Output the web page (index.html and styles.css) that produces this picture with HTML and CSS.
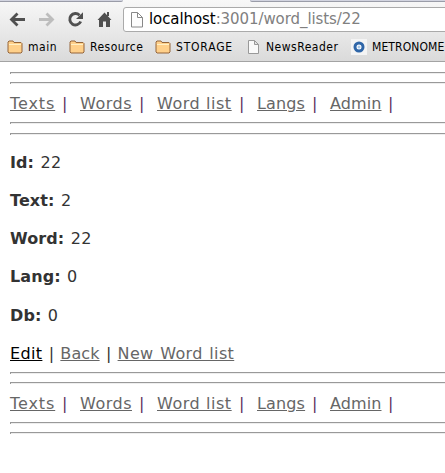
FILE: index.html
```html
<!DOCTYPE html>
<html lang="en">
<head>
<meta charset="utf-8">
<title>Word list</title>
<link rel="stylesheet" href="styles.css">
</head>
<body>
<header class="chrome">
  <div class="tabs"><i class="tab left"></i><i class="tab right"></i></div>
  <div class="toolbar">
    <svg class="nav" width="122" height="30" viewBox="0 6 122 30" fill="none" stroke="#505050" stroke-width="2.8">
      <path d="M25 19.500H12M17.500 13.500l-6 6 6 6"/>
      <path stroke="#bdbdbd" d="M39 19.500H52M46.500 13.500l6 6-6 6"/>
      <path stroke-width="2.900" d="M79.500 15.200A5.700 5.700 0 1 0 80.700 21.500"/>
      <path fill="#505050" stroke="none" d="M83 12.200V19H76z"/>
      <path fill="#505050" stroke="none" d="M104.500 12.500L111.500 20H110V27H106V21.500H103V27H99V20H97.500zM107 12h2v4h-2z"/>
    </svg>
    <div class="address">
      <svg width="12" height="16" viewBox="0 0 12 16" fill="#fdfdfd" stroke="#888"><path d="M.5.5h6l5 5v9.500H.5zM6.500.5v5h5"/></svg>
      <span class="url">localhost<span class="path">:3001/word_lists/22</span></span>
    </div>
  </div>
  <nav class="bookmarks">
    <a class="main"><svg class="folder" viewBox="0 0 16 14"><path d="M1 3.500V2L2 1h4l1 1.500h7l1 1V12l-1 1H2l-1-1z" fill="#ffd08a" stroke="#94653a"/><path d="M2 4.500h12" stroke="#fff0c5"/></svg><span>main</span></a>
    <a class="resource"><svg class="folder" viewBox="0 0 16 14"><path d="M1 3.500V2L2 1h4l1 1.500h7l1 1V12l-1 1H2l-1-1z" fill="#ffd08a" stroke="#94653a"/><path d="M2 4.500h12" stroke="#fff0c5"/></svg><span>Resource</span></a>
    <a class="storage"><svg class="folder" viewBox="0 0 16 14"><path d="M1 3.500V2L2 1h4l1 1.500h7l1 1V12l-1 1H2l-1-1z" fill="#ffd08a" stroke="#94653a"/><path d="M2 4.500h12" stroke="#fff0c5"/></svg><span>STORAGE</span></a>
    <a class="reader"><svg class="doc" viewBox="0 0 12 14"><path d="M.5.5h6l4 4v9H.5zM6.500.5v4h4" fill="#fafafa" stroke="#999"/></svg><span>NewsReader</span></a>
    <a class="metro"><svg class="dot" viewBox="0 0 16 16"><path d="M0 0h16v16H0z" fill="#f4f4f4"/><circle cx="8" cy="8" r="4" fill="#fff" stroke="#2f66a8" stroke-width="3"/><circle cx="8" cy="8" r="1.500" fill="#a9c9e8"/></svg><span>METRONOME</span></a>
  </nav>
</header>
<main>
  <hr><hr>
  <div class="menu"><a class="w1">Texts</a><b>|</b><a class="w2">Words</a><b>|</b><a class="w3">Word list</a><b>|</b><a class="w4">Langs</a><b>|</b><a class="w5">Admin</a><b>|</b></div>
  <hr><hr class="second">
  <div class="fields">
    <p><strong>Id:</strong> 22</p>
    <p><strong>Text:</strong> 2</p>
    <p><strong>Word:</strong> 22</p>
    <p><strong>Lang:</strong> 0</p>
    <p><strong>Db:</strong> 0</p>
  </div>
  <div class="actions"><a class="edit">Edit</a> | <a class="back">Back</a> | <a class="new">New Word list</a></div>
  <hr><hr>
  <div class="menu"><a class="w1">Texts</a><b>|</b><a class="w2">Words</a><b>|</b><a class="w3">Word list</a><b>|</b><a class="w4">Langs</a><b>|</b><a class="w5">Admin</a><b>|</b></div>
  <hr><hr>
</main>
</body>
</html>
```
FILE: styles.css
```css
* { box-sizing: border-box; }
body { margin: 0; background: #fff; color: #333; font: 16px/20px Verdana, "DejaVu Sans", sans-serif; overflow: hidden; }
svg { flex: none; display: block; }
.chrome { height: 62px; background: linear-gradient(#f8f8f8, #dadada); border-bottom: 1px solid #a3a3a3; color: #000; overflow: hidden; }
.tabs { height: 2px; display: flex; justify-content: space-between; }
.tab { height: 2px; background: #d2d4e0; border-bottom: 1px solid #9a9ca8; }
.left { width: 123px; border-bottom-right-radius: 3px; }
.right { width: 195px; border-bottom-left-radius: 3px; }
.toolbar { height: 30px; margin-top: 4px; display: flex; }
.nav { width: 122px; }
.address { margin: 1px 0 0 1px; height: 25px; width: 340px; border: 1px solid #aaa; border-radius: 3px; background: #fff; display: flex; align-items: center; padding-left: 7px; flex: none; }
.url { margin: -1px 0 0 6px; font: 15px/22px "DejaVu Sans", sans-serif; letter-spacing: -0.08px; white-space: nowrap; }
.path { color: #808080; }
.bookmarks { display: flex; font: 12px/16px "DejaVu Sans Condensed", "DejaVu Sans", sans-serif; letter-spacing: 0.5px; height: 22px; align-items: center; padding-left: 7px; }
.bookmarks a { display: flex; align-items: center; flex: none; white-space: nowrap; color: #000; }
.folder { width: 16px; height: 14px; margin-right: 5px; }
.doc { width: 12px; height: 14px; margin-right: 6px; }
.dot { width: 16px; height: 16px; margin-right: 5px; }
.main { width: 62px; }
.resource { width: 86px; }
.storage { width: 93px; letter-spacing: 0.8px; }
.reader { width: 103px; }
.metro { letter-spacing: 0.1px; }
main { padding: 10px 0 0 10px; }
hr { height: 2px; margin: 0 0 8px; border: 0; border-top: 1px solid #999; border-left: 1px solid #999; background: #eee; }
.menu { display: flex; height: 30px; line-height: 20px; padding-top: 2px; white-space: nowrap; }
main a { color: #666; text-decoration: underline; text-underline-offset: 1px; text-decoration-thickness: 1px; }
b { font-weight: 400; color: #603060; width: 25px; padding-left: 7px; }
.w1 { width: 45px; letter-spacing: 0.9px; }
.w2 { width: 52px; letter-spacing: 0.5px; }
.w3 { width: 75px; letter-spacing: 0.55px; }
.w4 { width: 48px; letter-spacing: 0.15px; }
.w5 { width: 51px; letter-spacing: 0.1px; }
.second { margin-top: 9px; }
.fields { display: flex; flex-direction: column; gap: 18.25px; padding-top: 9.5px; }
p { margin: 0; height: 20px; word-spacing: 1px; letter-spacing: 0.3px; }
strong { letter-spacing: 0.1px; }
.actions { margin-top: 18.5px; height: 28px; word-spacing: 1.2px; }
.actions .edit { color: #000; letter-spacing: 0.35px; }
.actions .back { letter-spacing: 0.1px; }
.actions .new { letter-spacing: 0.35px; }
```
